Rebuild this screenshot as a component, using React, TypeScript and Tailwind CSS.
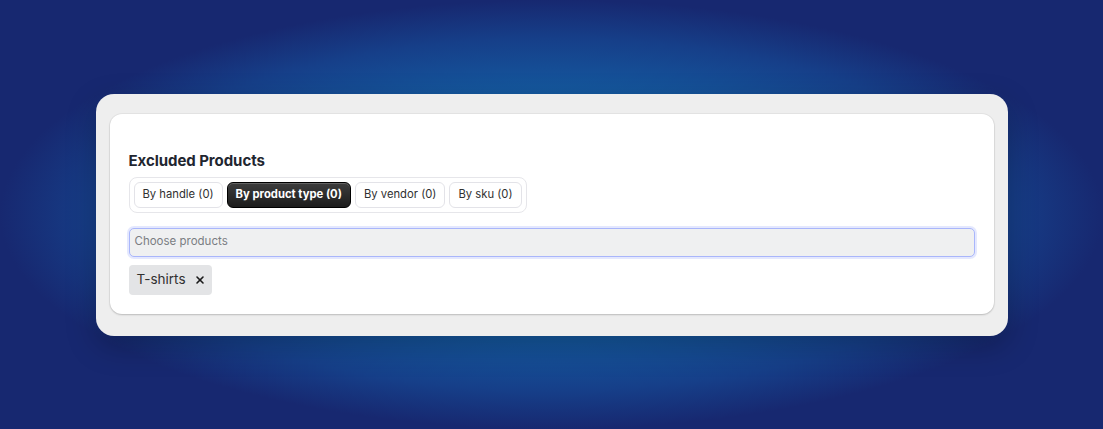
import { X } from 'lucide-react'

const tabs = [
  { label: 'By handle (0)', active: false },
  { label: 'By product type (0)', active: true },
  { label: 'By vendor (0)', active: false },
  { label: 'By sku (0)', active: false },
]

export default function App() {
  return (
    <div
      className="w-full h-[429px] flex items-center justify-center bg-[radial-gradient(ellipse_closest-side_at_50%_50%,#1668ad_0%,#1563a9_35%,#145aa0_55%,#163f89_82%,#172870_100%)] bg-[#172870]"
      style={{ fontFamily: 'Inter, "Liberation Sans", sans-serif' }}
    >
      <div className="w-[912px] rounded-[18px] bg-[#eeeeee] px-[14px] pt-[20px] pb-[22px] shadow-[0_10px_30px_rgba(0,0,0,0.25)]">
        <div className="rounded-[12px] bg-white px-[19px] pt-[37px] pb-[19px] shadow-[0_1px_2px_rgba(0,0,0,0.18),0_0_0_1px_rgba(0,0,0,0.04)]">
          <h2 className="text-[15px] leading-[20px] font-bold text-[#1f2630] tracking-[-0.05px]">Excluded Products</h2>

          <div className="mt-[6px] inline-flex gap-[4px] rounded-[8px] border border-[#e6e6ea] p-[4px]">
            {tabs.map((t) =>
              t.active ? (
                <button
                  key={t.label}
                  className="h-[26px] px-[8px] rounded-[6px] border border-black bg-[linear-gradient(#3d3d3d,#1c1c1c)] text-[11.25px] font-bold text-white shadow-[inset_0_1px_0_rgba(255,255,255,0.2)]"
                >
                  {t.label}
                </button>
              ) : (
                <button
                  key={t.label}
                  className="h-[26px] px-[8px] rounded-[6px] border-[1.5px] border-[#e3e3e8] bg-white text-[11.25px] text-[#303030]"
                >
                  {t.label}
                </button>
              )
            )}
          </div>

          <div className="mt-[15px] h-[29px] rounded-[5px] border border-[#a9b6fb] bg-[#eff0f1] shadow-[0_0_0_2px_rgba(165,180,252,0.3)] flex items-center px-[5px]">
            <span className="text-[11.5px] text-[#7a7d82]">Choose products</span>
          </div>

          <div className="mt-[8px] inline-flex items-center gap-[8px] h-[30px] rounded-[4px] bg-[#e3e4e6] pl-[8px] pr-[6px]">
            <span className="text-[13.5px] text-[#303030]">T-shirts</span>
            <X className="w-[12px] h-[12px] text-[#1a1a1a]" strokeWidth={3.2} />
          </div>
        </div>
      </div>
    </div>
  )
}
